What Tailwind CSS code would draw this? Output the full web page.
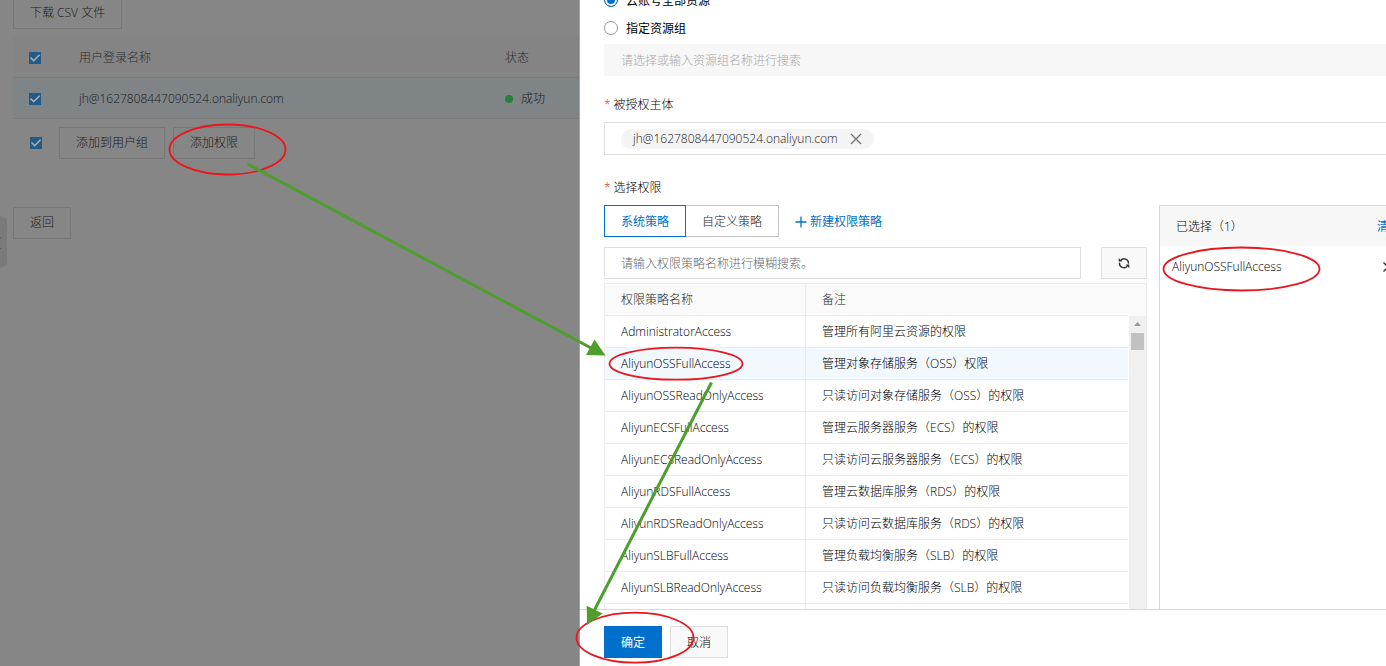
<!DOCTYPE html>
<html lang="zh-CN">
<head>
<meta charset="utf-8">
<title>添加权限</title>
<script src="https://cdn.jsdelivr.net/npm/@tailwindcss/browser@4"></script>
</head>
<body class="relative flex h-screen overflow-hidden bg-white font-['Open_Sans','Noto_Sans_CJK_SC',sans-serif] text-xs font-light text-black">

<!-- Dimmed page behind the drawer -->
<main class="relative w-[580px] shrink-0 overflow-hidden border-r border-[#a0a0a0] bg-[#868686] pl-[13px] text-[#1c1c1c]">
  <button class="-mt-[3px] block h-8 border border-[#777] px-4">下载 CSV 文件</button>
  <table class="mt-2 w-full table-fixed border-separate border-spacing-0 text-left">
    <thead>
      <tr class="h-[41px] bg-[#848484] text-[#303030]">
        <th class="w-[50px] border-b border-[#7b7b7b] pt-px pl-4">
          <label class="grid size-3 place-items-center"><input type="checkbox" checked aria-label="全选" class="col-start-1 row-start-1 size-3 appearance-none bg-[#235b88]"><svg class="col-start-1 row-start-1 size-3" viewBox="0 0 12 12" fill="none" stroke="#a9b0b6" stroke-width="1.6"><path d="M1.5 5.5 4.7 8.7 10.6 2.8"/></svg></label>
        </th>
        <th class="w-[426px] border-b border-[#7b7b7b] pt-0.5 pl-4 font-light">用户登录名称</th>
        <th class="border-b border-[#7b7b7b] pt-0.5 pl-4 font-light">状态</th>
      </tr>
    </thead>
    <tbody>
      <tr class="h-[41px] bg-[#7f8487]">
        <td class="border-b border-[#7b7b7b] pt-px pl-4">
          <label class="grid size-3 place-items-center"><input type="checkbox" checked aria-label="选择用户" class="col-start-1 row-start-1 size-3 appearance-none bg-[#235b88]"><svg class="col-start-1 row-start-1 size-3" viewBox="0 0 12 12" fill="none" stroke="#a9b0b6" stroke-width="1.6"><path d="M1.5 5.5 4.7 8.7 10.6 2.8"/></svg></label>
        </td>
        <td class="border-b border-[#7b7b7b] pt-0.5 pl-4">jh@1627808447090524.onaliyun.com</td>
        <td class="border-b border-[#7b7b7b] pt-0.5 pl-4"><span class="flex items-center gap-2"><i class="size-2 rounded-full bg-[#24803a]"></i>成功</span></td>
      </tr>
    </tbody>
  </table>
  <div class="mt-2 flex h-8 items-center gap-2 pl-[17px]">
    <label class="mr-[9px] grid size-3 place-items-center"><input type="checkbox" checked aria-label="全选用户" class="col-start-1 row-start-1 size-3 appearance-none bg-[#235b88]"><svg class="col-start-1 row-start-1 size-3" viewBox="0 0 12 12" fill="none" stroke="#a9b0b6" stroke-width="1.6"><path d="M1.5 5.5 4.7 8.7 10.6 2.8"/></svg></label>
    <button class="h-8 border border-[#777] px-4">添加到用户组</button>
    <button class="h-8 border border-[#777] px-4">添加权限</button>
  </div>
  <button class="mt-12 block h-8 border border-[#777] px-4">返回</button>
  <button aria-label="展开" class="absolute top-[216px] left-0 h-[52px] w-[7px]">
    <svg class="h-full w-full" viewBox="0 0 7 52"><path d="M0 0 7 3V49L0 52Z" fill="#7a7a7a"/><path d="M0 21.500 1.500 22.500M0 33 1.500 32" stroke="#555"/></svg>
  </button>
</main>

<!-- Drawer -->
<section class="flex min-w-0 flex-1 flex-col overflow-hidden bg-white">
  <div class="-mr-6 flex min-h-0 flex-1 flex-col overflow-hidden pl-6">
    <div class="-mt-3.5 shrink-0">
      <label class="flex h-7 items-center gap-2 font-normal"><input type="radio" name="scope" checked class="size-3.5 appearance-none rounded-full border border-[#0070cc] bg-[#0070cc] shadow-[inset_0_0_0_2px_white]"><span class="pt-0.5">云账号全部资源</span></label>
      <label class="flex h-7 items-center gap-2 font-normal"><input type="radio" name="scope" class="size-3.5 appearance-none rounded-full border border-[#999] bg-white"><span class="pt-0.5">指定资源组</span></label>
    </div>
    <input type="text" disabled aria-label="资源组" placeholder="请选择或输入资源组名称进行搜索" class="mt-0.5 h-8 w-full shrink-0 bg-[#f7f7f7] px-[17px] placeholder:text-[#a8a8a8]">
    <h3 class="mt-[21px] flex h-4 shrink-0 gap-[3px] leading-4"><span class="text-[#d93026]">*</span>被授权主体</h3>
    <div class="mt-[9px] flex h-[33px] shrink-0 items-center border border-[#dedede] px-4">
      <span class="flex h-5 items-center gap-3 rounded-full bg-[#f4f4f4] px-3 text-[#222]">jh@1627808447090524.onaliyun.com
        <button aria-label="移除"><svg class="size-3" viewBox="0 0 12 12" stroke="#777" stroke-width="1.400"><path d="M1 1 11 11M11 1 1 11"/></svg></button>
      </span>
    </div>
    <h3 class="mt-[25px] flex h-4 shrink-0 gap-[3px] leading-4"><span class="text-[#d93026]">*</span>选择权限</h3>
    <div class="mt-[9px] flex min-h-0 flex-1 gap-3">
      <div class="flex w-[543px] flex-col overflow-hidden">
        <div class="flex h-8 shrink-0 items-center">
          <button class="h-8 border border-[#0070cc] px-4 pt-0.5 font-normal text-[#0070cc]">系统策略</button>
          <button class="h-8 border border-l-0 border-[#c4c4c4] px-4 pt-0.5 text-[#222]">自定义策略</button>
          <a href="#" class="ml-4 flex items-center gap-[3px] pt-0.5 font-normal text-[#0070cc]"><svg class="size-3" viewBox="0 0 12 12" stroke="currentColor" stroke-width="1.300"><path d="M6 .5V11.500M.5 6H11.500"/></svg>新建权限策略</a>
        </div>
        <div class="mt-2.5 flex shrink-0 gap-5">
          <input type="text" aria-label="搜索权限策略" placeholder="请输入权限策略名称进行模糊搜索。" class="h-8 min-w-0 flex-1 border border-[#dedede] px-4 placeholder:text-[#666]">
          <button aria-label="刷新" class="grid h-8 w-[46px] place-items-center border border-[#dedede] bg-[#f9f9f9]">
            <svg class="size-3" viewBox="0 0 12 12" fill="none" stroke="#333" stroke-width="1.400"><path d="M2.600 3.600A4.300 4.300 0 0 1 10.400 6.600M9.400 8.800A4.300 4.300 0 0 1 1.600 5.600"/><path d="M.7 1V4.600H4.300ZM11.300 11.200V7.600H7.700Z" fill="#333" stroke="none"/></svg>
          </button>
        </div>
        <table class="mt-1 w-full table-fixed border-separate border-spacing-0 border border-b-0 border-[#ebebeb] text-left">
          <thead>
            <tr class="h-8 bg-[#fafafa] text-[#222]">
              <th class="w-[201px] border-r border-b border-[#ebebeb] pl-4 font-light">权限策略名称</th>
              <th class="border-b border-[#ebebeb] pl-4 font-light">备注</th>
              <th class="w-[18px]"></th>
            </tr>
          </thead>
          <tbody class="[&_td:nth-child(-n+2)]:border-b [&_td:nth-child(-n+2)]:border-[#ebebeb] [&_td:nth-child(-n+2)]:pl-4 [&_td:first-child]:border-r">
            <tr class="h-8"><td>AdministratorAccess</td><td>管理所有阿里云资源的权限</td>
              <td rowspan="10" class="border-l border-white bg-[#f0f0f0] align-top">
                <svg class="mx-auto mt-1.5 h-1 w-[7px]" viewBox="0 0 7 4"><path d="M3.500 0 7 4H0Z" fill="#999"/></svg>
                <div class="mx-auto mt-[7px] h-[17px] w-[13px] bg-[#c1c1c1]"></div>
              </td></tr>
            <tr class="h-8 bg-[#f1f8fe]"><td>AliyunOSSFullAccess</td><td>管理对象存储服务（OSS）权限</td></tr>
            <tr class="h-8"><td>AliyunOSSReadOnlyAccess</td><td>只读访问对象存储服务（OSS）的权限</td></tr>
            <tr class="h-8"><td>AliyunECSFullAccess</td><td>管理云服务器服务（ECS）的权限</td></tr>
            <tr class="h-8"><td>AliyunECSReadOnlyAccess</td><td>只读访问云服务器服务（ECS）的权限</td></tr>
            <tr class="h-8"><td>AliyunRDSFullAccess</td><td>管理云数据库服务（RDS）的权限</td></tr>
            <tr class="h-8"><td>AliyunRDSReadOnlyAccess</td><td>只读访问云数据库服务（RDS）的权限</td></tr>
            <tr class="h-8"><td>AliyunSLBFullAccess</td><td>管理负载均衡服务（SLB）的权限</td></tr>
            <tr class="h-8"><td>AliyunSLBReadOnlyAccess</td><td>只读访问负载均衡服务（SLB）的权限</td></tr>
            <tr class="h-8"><td></td><td></td></tr>
          </tbody>
        </table>
      </div>
      <aside class="min-w-0 flex-1 border-t border-l border-[#d8d8d8]">
        <div class="flex h-10 items-center justify-between bg-[#f7f7f7] pt-0.5 pr-[9px] pl-4">
          <span>已选择（1）</span><a href="#" class="font-normal text-[#0070cc]">清空</a>
        </div>
        <div class="flex h-10 items-center justify-between pt-0.5 pr-4 pl-3">
          <span>AliyunOSSFullAccess</span>
          <button aria-label="移除策略"><svg class="size-3" viewBox="0 0 12 12" stroke="#333" stroke-width="1.400"><path d="M1.500 1.500 10.500 10.500M10.500 1.500 1.500 10.500"/></svg></button>
        </div>
      </aside>
    </div>
  </div>
  <footer class="flex h-[57px] shrink-0 gap-2 border-t border-[#d8d8d8] pt-4 pl-6">
    <button class="h-8 border border-[#0070cc] bg-[#0070cc] px-4 pt-0.5 font-normal text-white">确定</button>
    <button class="h-8 border border-[#dedede] bg-[#f9f9f9] px-4 pt-0.5">取消</button>
  </footer>
</section>

<!-- Hand-drawn annotations -->
<svg class="pointer-events-none absolute top-0 left-0" width="1386" height="666" viewBox="0 0 1386 666" fill="none">
  <g stroke="#ea161e" stroke-width="1.800">
    <ellipse cx="227.500" cy="149.500" rx="58" ry="25"/>
    <ellipse cx="676" cy="363.700" rx="66.500" ry="16"/>
    <ellipse cx="1241.500" cy="269" rx="78" ry="21.500"/>
    <ellipse cx="635" cy="637.700" rx="58.500" ry="25"/>
  </g>
  <g stroke="#4e9e2d" stroke-width="3">
    <path d="M247.500 164 592 348.500"/>
    <path d="M711.500 382.500 594 611"/>
  </g>
  <path d="M594.500 339.500 586 355 605.500 355.500ZM586.700 605.700 602.500 613.500 587 625Z" fill="#4e9e2d"/>
</svg>
</body>
</html>
